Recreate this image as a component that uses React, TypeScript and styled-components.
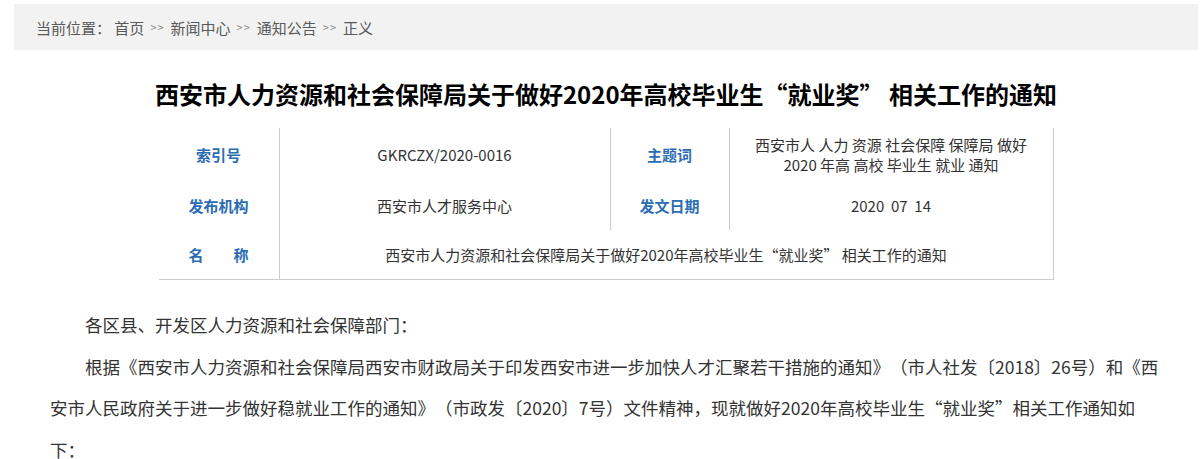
import { styled, createGlobalStyle } from "styled-components";

const GlobalStyle = createGlobalStyle`
  body {
    margin: 0;
    background: #fff;
    font-family: "Microsoft YaHei", "Noto Sans CJK SC", "Noto Sans", sans-serif;
    color: #333;
  }
`;

const Page = styled.div`
  width: 1184px;
  padding: 4px 2px 0 14px;
`;

const Crumbs = styled.div`
  height: 46px;
  background: #f2f2f2;
  display: flex;
  align-items: center;
  padding-left: 22px;
  font-size: 15px;
  color: #595959;
`;

const Sep = styled.span`
  font-size: 11px;
  color: #888;
  margin: 0 6px;
  letter-spacing: 1px;
`;

const Title = styled.h1`
  margin: 27px 0 0;
  text-align: center;
  font-size: 24px;
  line-height: 34px;
  font-weight: bold;
  color: #000;
`;

const Table = styled.div`
  width: 895px;
  margin: 17px auto 0;
  display: grid;
  grid-template-columns: 121px 331px 119px 324px;
  grid-template-rows: 54px 48px 49px;
  border-bottom: 1px solid #ccc;
`;

const Cell = styled.div<{ $span?: number }>`
  grid-column: span ${(p) => p.$span || 1};
  border-right: 1px solid #ccc;
  display: flex;
  align-items: center;
  justify-content: center;
  text-align: center;
  font-size: 15px;
  line-height: 20px;
  color: #333;
`;

const Label = styled(Cell)`
  color: #2b6cb3;
  font-weight: bold;
`;

const Body = styled.div`
  width: 1112px;
  margin: 24px 0 0 36px;
  font-size: 17.5px;
  line-height: 41.5px;
  color: #333;
  p {
    margin: 0;
    text-indent: 2em;
  }
`;

// keeps the full spacing between closing and opening brackets
const Punct = styled.span`
  text-spacing-trim: space-all;
`;

const App = () => {
  return (
    <Page>
      <GlobalStyle />
      <Crumbs>
        当前位置：&nbsp;首页<Sep>&gt;&gt;</Sep>新闻中心<Sep>&gt;&gt;</Sep>通知公告
        <Sep>&gt;&gt;</Sep>正义
      </Crumbs>
      <Title>
        西安市人力资源和社会保障局关于做好2020年高校毕业生“就业奖” 相关工作的通知
      </Title>
      <Table>
        <Label>索引号</Label>
        <Cell>GKRCZX/2020-0016</Cell>
        <Label>主题词</Label>
        <Cell>
          西安市人 人力 资源 社会保障 保障局 做好
          <br />
          2020 年高 高校 毕业生 就业 通知
        </Cell>
        <Label>发布机构</Label>
        <Cell>西安市人才服务中心</Cell>
        <Label>发文日期</Label>
        <Cell>2020&nbsp; 07&nbsp; 14</Cell>
        <Label>名　　称</Label>
        <Cell $span={3}>
          西安市人力资源和社会保障局关于做好2020年高校毕业生“就业奖” 相关工作的通知
        </Cell>
      </Table>
      <Body>
        <p>各区县、开发区人力资源和社会保障部门：</p>
        <p>
          根据《西安市人力资源和社会保障局西安市财政局关于印发西安市进一步加快人才汇聚若干措施的通知<Punct>》（</Punct>市人社发〔2018〕26号）和《西安市人民政府关于进一步做好稳就业工作的通知<Punct>》（</Punct>市政发〔2020〕7号）文件精神，现就做好2020年高校毕业生“就业奖”相关工作通知如下：
        </p>
      </Body>
    </Page>
  );
};

export default App;
